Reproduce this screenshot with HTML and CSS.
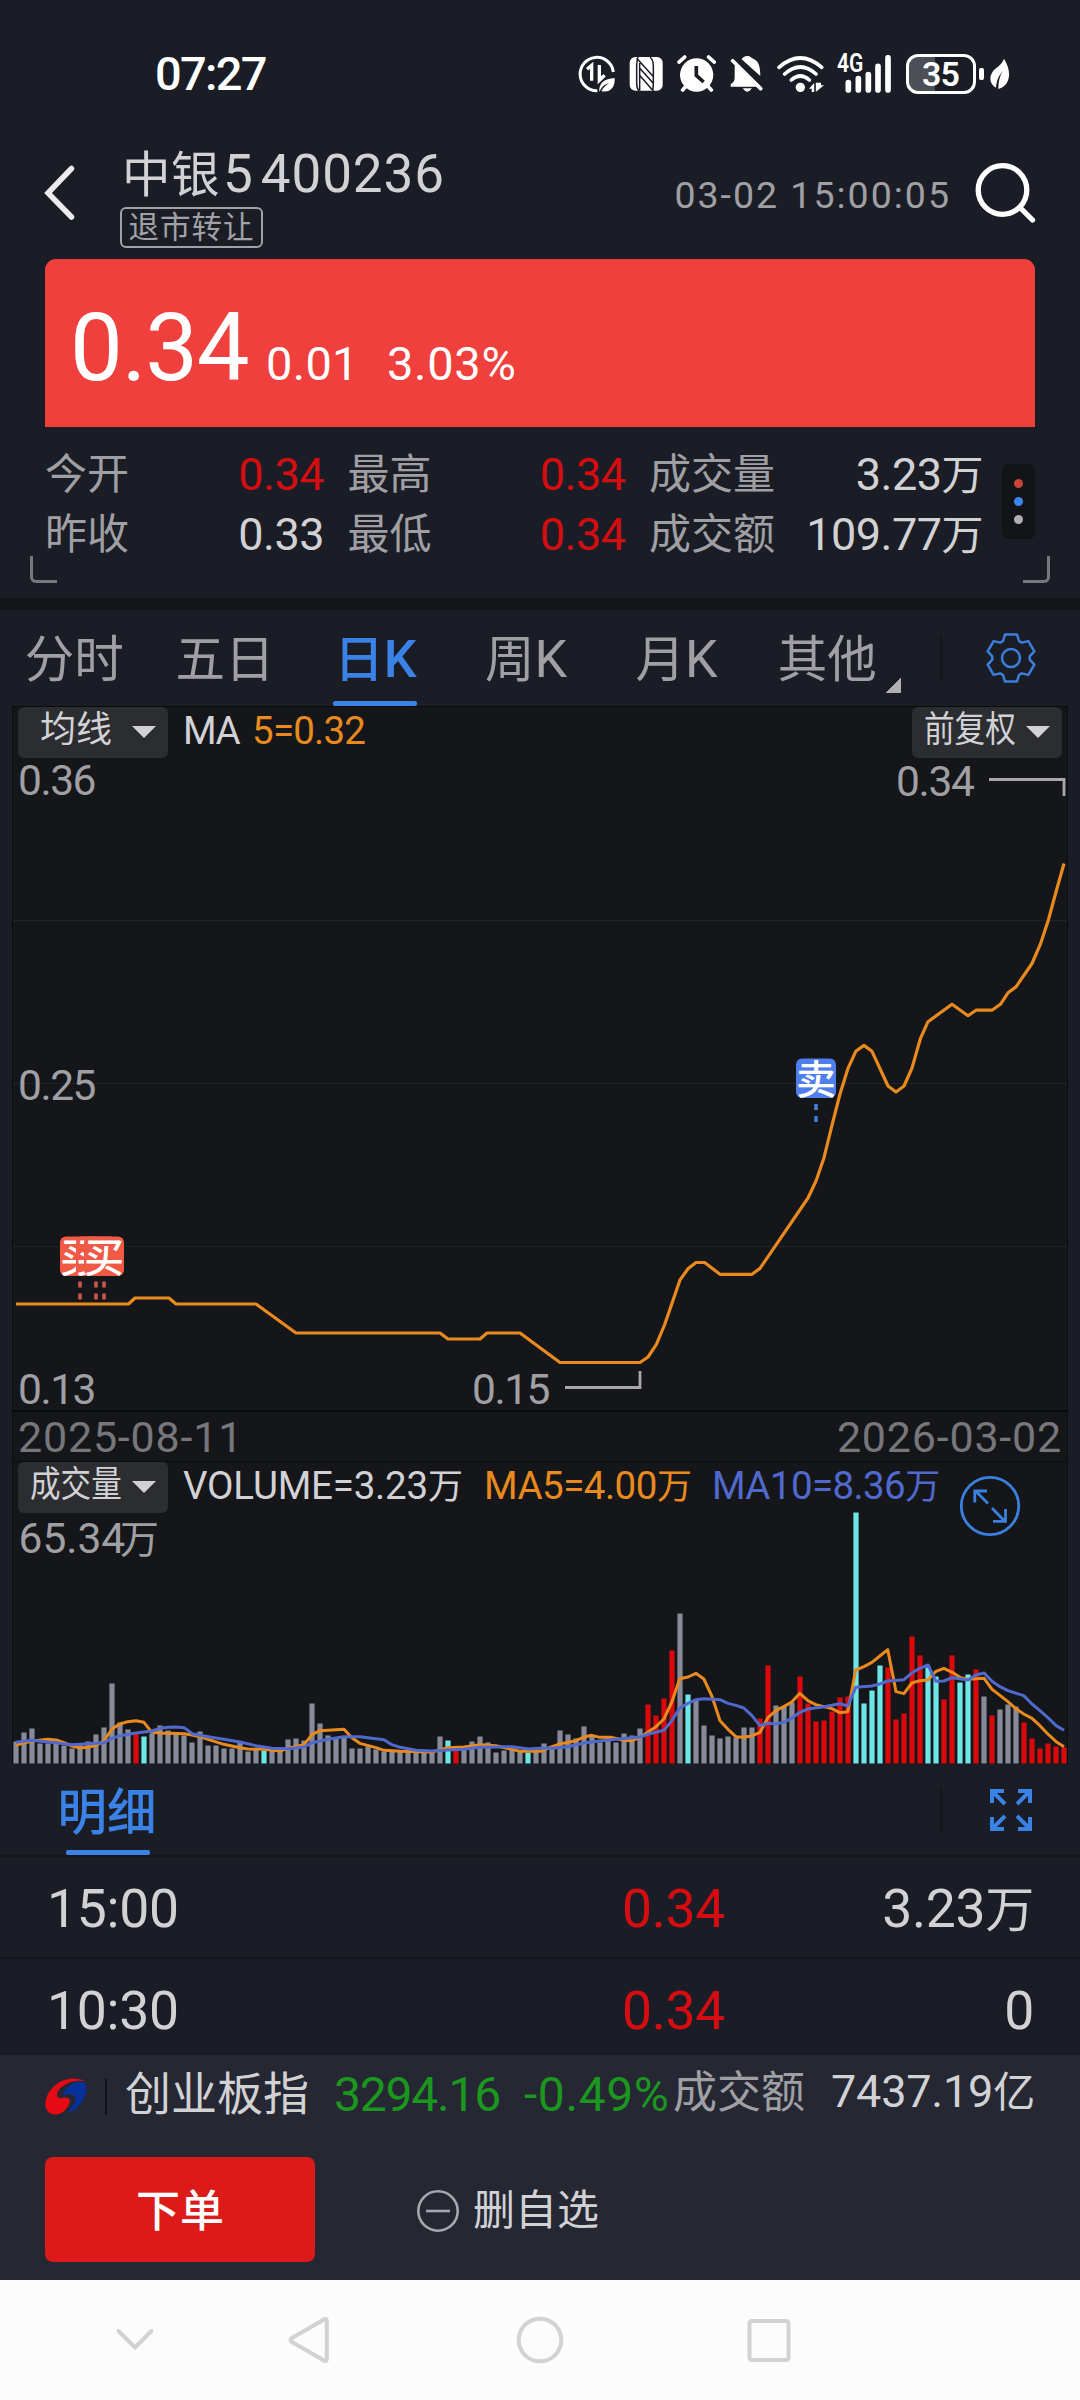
FILE: index.html
```html
<!DOCTYPE html>
<html lang="zh-CN">
<head>
<meta charset="utf-8">
<title>中银5 400236</title>
<link rel="stylesheet" href="styles.css">
</head>
<body>
<div class="statusbar">
  <span class="clock">07:27</span>
  <div class="status-icons">
    <svg class="ic-saver" viewBox="24 27 114 114" width="38" height="38">
      <path d="M130 78A50 50 0 1 0 82 134" fill="none" stroke="#fff" stroke-width="9"/>
      <path d="M51 70l14-12v46M88 57v46l16-15" fill="none" stroke="#fff" stroke-width="10"/>
      <path d="M88 138c-2-24 12-40 46-42c2 30-16 46-40 39c8-12 14-18 24-24c-14 4-24 12-30 27z" fill="#fff"/>
    </svg>
    <svg class="ic-nfc" viewBox="177 31 104 108" width="34.7" height="36">
      <rect x="179" y="34" width="99" height="101" rx="17" fill="#fff"/>
      <path d="M204 34c-4 10-4 20-4 34v44c0 10 2 18 6 23M209 52V135M200 38L249 92M208 66L249 112M208 88L250 136M240 34c8 6 10 14 10 28v40c0 14 0 24-2 33" fill="none" stroke="#1b1d26" stroke-width="4.500"/>
    </svg>
    <svg class="ic-alarm" viewBox="321 27 118 114" width="39.3" height="38">
      <circle cx="380" cy="87" r="50" fill="#fff"/>
      <path d="M327 48l17-15M433 48l-17-15M338 132l18-20M424 132l-18-20" stroke="#fff" stroke-width="11" stroke-linecap="round"/>
      <path d="M379 60v28l22 20" fill="none" stroke="#1b1d26" stroke-width="11"/>
    </svg>
    <svg class="ic-bell" viewBox="480 27 100 114" width="33.3" height="38">
      <path d="M496 52L566 122H482v-8q12-4 12-20V62zM515 40c4-10 22-14 30-4c20 6 26 22 26 54z" fill="#fff"/>
      <path d="M488 44l84 84" stroke="#fff" stroke-width="11" stroke-linecap="round"/>
      <path d="M518 127h28q-14 20-28 0z" fill="#fff"/>
    </svg>
    <svg class="ic-wifi" viewBox="619 27 146 114" width="48.7" height="38">
      <g fill="none" stroke="#fff" stroke-width="11" stroke-linecap="round">
        <path d="M628 64q64-56 128 0M645 84q47-42 94 0M665 102q27-24 54 0"/>
      </g>
      <circle cx="692" cy="124" r="14" fill="#fff"/>
      <path d="M718 128l16-18v28h-8v-10zM763 118h-9v-8h-16v28z" fill="#fff"/>
      <path d="M736 108v32" stroke="#1b1d26" stroke-width="3"/>
    </svg>
    <div class="signal">
      <span class="net">4G</span>
      <svg viewBox="824 27 144 114" width="48" height="38">
        <path d="M837 110v22M867 98v34M897 86v46M926 61v71M956 35v97" stroke="#fff" stroke-width="17" stroke-linecap="round"/>
      </svg>
    </div>
    <div class="battery"><span>35</span></div>
    <i class="battery-tip"></i>
    <svg class="ic-leaf" viewBox="1260 35 60 95" width="20" height="31.7">
      <path d="M1302 37c12 20 18 40 14 58c-4 18-14 28-31 33c0-22 4-38 13-54c-14 18-19 32-20 50c-18-10-22-30-10-48c8-12 26-18 34-39z" fill="#fff"/>
    </svg>
  </div>
</div>

<header class="header">
  <svg class="back" viewBox="0 0 32 56" width="32" height="56"><path d="M27.500 3.500L4 28L27.500 52" fill="none" stroke="#ececee" stroke-width="5.500" stroke-linecap="round"/></svg>
  <div class="title">
    <div class="name"><span>中银</span><b>5</b><b class="code">400236</b></div>
    <div class="badge">退市转让</div>
  </div>
  <time class="stamp">03-02 15:00:05</time>
  <svg class="search" viewBox="0 0 62 62" width="62" height="62"><g fill="none" stroke="#fff" stroke-width="5.300" stroke-linecap="round"><circle cx="27.500" cy="28" r="24.300"/><path d="M46 46.500L57.500 58"/></g></svg>
</header>

<section class="price-card">
  <span class="price">0.34</span><span class="delta">0.01</span><span class="delta pct">3.03%</span>
</section>

<section class="quote">
  <div class="cells">
    <div class="cell"><span>今开</span><b class="red">0.34</b></div>
    <div class="cell"><span>最高</span><b class="red">0.34</b></div>
    <div class="cell"><span>成交量</span><b>3.23<i>万</i></b></div>
    <div class="cell"><span>昨收</span><b>0.33</b></div>
    <div class="cell"><span>最低</span><b class="red">0.34</b></div>
    <div class="cell"><span>成交额</span><b>109.77<i>万</i></b></div>
  </div>
  <div class="more"><i class="d1"></i><i class="d2"></i><i class="d3"></i></div>
  <i class="corner left"></i><i class="corner right"></i>
</section>
<div class="band"></div>

<nav class="tabs">
  <a class="tab">分时</a>
  <a class="tab">五日</a>
  <a class="tab active">日<b>K</b></a>
  <a class="tab">周<b>K</b></a>
  <a class="tab">月<b>K</b></a>
  <a class="tab other">其他</a>
  <i class="divider"></i>
  <svg class="gear" viewBox="-26 -26 52 52" width="52" height="52"><g fill="none" stroke="#3b7fdd" stroke-width="2.500" stroke-linejoin="round"><path d="M-8-17L-6-23.500H6L8-17L10.700-15.400L17.350-16.900L23.350-6.550L18.700-1.600V1.600L23.350 6.550L17.350 16.900L10.700 15.400L8 17L6 23.500H-6L-8 17L-10.700 15.400L-17.350 16.900L-23.350 6.550L-18.700 1.600V-1.600L-23.350-6.550L-17.350-16.900L-10.700-15.400Z"/><circle r="9"/></g></svg>
</nav>

<main class="chart">
  <section class="pane price-pane">
    <svg class="plot" viewBox="13 706 1054 704">
      <path class="grid" d="M13 920.500H1067M13 1083.500H1067M13 1246.500H1067"/>
      <polyline class="ma5" points="16,1304 128.5,1304 135,1298 169,1298 176,1304 256,1304 296,1333 440,1333 448,1339 480,1339 487,1333 520,1333 560,1362.5 640,1362.5 648,1357 656.4,1344.3 664.7,1324.5 672.6,1301.6 680,1279.9 688,1268.8 696,1262.5 704.6,1262.5 720,1274.3 752,1274.3 760,1268.4 808,1198 816,1181 824,1157.7 832.4,1123.7 840,1094 848,1068.3 855.8,1051.3 864,1045.4 872,1051.3 888,1086 896,1092 904,1086 912,1068 920.5,1038.3 928,1021.7 952,1004.3 968,1015.7 976,1010.2 992,1010.2 1000.4,1004.3 1008,992.8 1016,986.9 1032,963.5 1040.4,944.2 1048.6,919.2 1056,892 1064,863.5"/>
      <path class="leader" d="M989 779.500H1064V796M565 1387.500H640V1371"/>
      <g class="axis">
        <text x="18" y="795" textLength="78.500">0.36</text>
        <text x="18" y="1100" textLength="78.500">0.25</text>
        <text x="18" y="1403.500" textLength="78.500">0.13</text>
        <text x="896" y="795.500" textLength="79">0.34</text>
        <text x="472" y="1403.500" textLength="78.500">0.15</text>
      </g>
      <g class="buy">
        <g><rect x="60" y="1236.500" width="40" height="39.500" rx="6"/><text x="80" y="1272">买</text></g>
        <g><rect x="76" y="1236.500" width="40" height="39.500" rx="6"/><text x="96" y="1272">买</text></g>
        <g><rect x="84" y="1236.500" width="40" height="39.500" rx="6"/><text x="104" y="1272">买</text></g>
        <path d="M80 1281.500V1300M96 1281.500V1300M104 1281.500V1300"/>
      </g>
      <g class="sell">
        <rect x="796" y="1058.500" width="40" height="39.500" rx="6"/><text x="816" y="1094">卖</text>
        <path d="M816 1104V1122"/>
      </g>
    </svg>
    <div class="legend">
      <button class="pill"><span>均线</span></button>
      <span class="ma">MA</span><span class="ma orange">5=0.32</span>
      <button class="pill narrow right"><span>前复权</span></button>
    </div>
  </section>
  <div class="dates"><span>2025-08-11</span><span>2026-03-02</span></div>
  <section class="pane volume-pane">
    <svg class="plot" viewBox="13 1461 1054 303">
      <text class="axis" x="18.500" y="1552.500">65.34<tspan class="cjk" x="120">万</tspan></text>
      <g id="bars"></g>
      <g class="vol5" transform="translate(0 1440) scale(.34435 .33333)"><polyline points="46,915 93,903 139,898 163,900 186,908 209,918 232,924 256,922 279,916 302,903 325,867 348,852 371,845 395,842 418,847 441,877 465,879 535,881 558,885 581,890 604,898 650,913 697,923 720,927 767,928 813,933 836,925 883,914 906,884 929,872 999,868 1022,893 1045,910 1092,923 1115,931 1162,934 1254,936 1301,923 1347,921 1394,914 1440,917 1487,928 1510,934 1568,934 1579,930 1603,920 1626,912 1672,902 1696,891 1719,886 1742,892 1773,892 1812,901 1835,902 1859,892 1881,877 1905,860 1928,837 1951,786 1974,716 1998,711 2021,700 2044,717 2068,770 2091,842 2114,868 2137,890 2160,892 2183,888 2207,877 2230,833 2253,812 2276,800 2299,786 2323,760 2346,782 2369,794 2416,806 2439,818 2462,815 2485,690 2509,680 2532,667 2555,648 2578,629 2602,755 2625,761 2648,729 2671,722 2695,720 2718,694 2741,685 2765,697 2788,712 2811,718 2834,716 2858,715 2881,748 2904,766 2927,785 2950,806 2973,822 2997,835 3020,857 3043,882 3067,905 3090,920"/></g>
      <g class="vol10" transform="translate(0 1440) scale(.34435 .33333)"><polyline points="46,907 93,901 139,906 163,908 209,914 232,913 279,910 302,908 325,895 348,887 395,879 441,873 465,865 488,862 511,861 535,863 558,881 604,890 650,898 697,906 743,917 790,925 836,926 883,921 906,908 952,898 999,890 1045,890 1115,899 1138,914 1162,922 1208,931 1254,933 1301,930 1347,928 1394,922 1487,920 1534,927 1568,925 1603,925 1649,920 1696,909 1742,903 1789,898 1859,891 1881,883 1928,871 1951,842 1974,804 1998,790 2021,779 2044,776 2091,779 2114,790 2137,796 2160,804 2183,826 2207,857 2230,850 2253,852 2276,847 2299,835 2323,817 2346,807 2393,800 2416,796 2439,791 2462,798 2485,742 2532,738 2555,732 2578,723 2625,719 2648,699 2671,685 2695,675 2718,724 2741,723 2765,713 2811,720 2834,705 2858,699 2881,724 2904,740 2927,752 2973,767 2997,792 3020,812 3043,833 3067,857 3090,871"/></g>
      <g class="enlarge"><circle cx="990" cy="1506" r="28.700"/><path d="M988 1503.500L975 1490.500M987 1491H974.800V1502.500M992 1508L1005 1521.500M1005.500 1509V1521.300H993"/></g>
    </svg>
    <div class="legend vol">
      <button class="pill narrow"><span>成交量</span></button>
      <span class="v1">VOLUME=3.23<i>万</i></span><span class="v2 orange">MA5=4.00<i>万</i></span><span class="v3 blue">MA10=8.36<i>万</i></span>
    </div>
  </section>
</main>

<section class="detail-head">
  <a class="detail-tab">明细</a>
  <i class="divider"></i>
  <svg class="expand" viewBox="0 0 42 42" width="42" height="42"><g fill="none" stroke="#3a82e6" stroke-width="4"><path d="M2 14V2H14M2 2L15 15M28 2H40V14M40 2L27 15M2 28V40H14M2 40L15 27M40 28V40H28M40 40L27 27"/></g></svg>
</section>
<section class="trades">
  <div class="trade"><span>15:00</span><span class="red">0.34</span><span>3.23<i>万</i></span></div>
  <div class="trade"><span>10:30</span><span class="red">0.34</span><span>0</span></div>
</section>

<footer class="panel">
  <div class="index">
    <svg class="logo" viewBox="131 635 121 107" width="42" height="37">
      <path d="M247 644C215 628 172 638 148 668C126 695 126 730 150 739C174 746 196 728 202 706C206 692 190 688 176 694C162 692 162 676 178 662C198 645 222 640 247 644Z" fill="#e60a14"/>
      <path d="M181 685C190 660 214 643 238 646C256 652 254 676 240 700C228 720 212 732 192 738C208 722 220 704 220 692C216 680 196 680 181 685Z" fill="#06309a"/>
    </svg>
    <i class="sep"></i>
    <span class="idx-name">创业板指</span>
    <span class="idx-val">3294.16</span><span class="idx-pct">-0.49%</span>
    <span class="idx-label">成交额</span>
    <span class="idx-amt">7437.19<i>亿</i></span>
  </div>
  <div class="actions">
    <button class="order">下单</button>
    <svg class="minus" viewBox="0 0 42 42" width="42" height="42"><g fill="none" stroke="#a8a8ac" stroke-width="2.600"><circle cx="21" cy="21" r="19.700"/><path d="M9 21H33"/></g></svg>
    <span class="remove">删自选</span>
  </div>
</footer>

<div class="navbar">
  <svg viewBox="0 0 1080 120" width="1080" height="120"><g fill="none" stroke="#d2d2d4" stroke-width="4" stroke-linecap="round" stroke-linejoin="round"><path d="M118.500 51L135 67.500L151.500 51"/><path d="M324 39.500Q326.800 38 326.800 41V79Q326.800 82 324 80.500L292 62Q289 60 292 58Z"/><circle cx="540" cy="60" r="21.300"/><rect x="749.500" y="41" width="39" height="39" rx="2.500"/></g></svg>
</div>
<script src="script.js"></script>
</body>
</html>
```
FILE: styles.css
```css
* { box-sizing: border-box; }
body {
  margin: 0;
  width: 1080px;
  background: #1b1d26;
  color: #d2d2d5;
  font-family: Roboto, "Noto Sans CJK SC", sans-serif;
}
b, i { font-weight: inherit; font-style: normal; }
button { border: 0; padding: 0; font-family: inherit; color: inherit; }
svg { display: block; flex: none; }
.red { color: #d60d10; }
.orange { color: #e98a1f; }
.blue { color: #5069cd; }

/* status bar */
.statusbar {
  height: 147px;
  padding: 0 70px 0 155px;
  display: flex;
  align-items: center;
  justify-content: space-between;
  color: #fff;
}
.clock { font-size: 47px; font-weight: 500; letter-spacing: -1.7px; line-height: 60px; }
.status-icons { display: flex; align-items: center; }
.ic-nfc { margin-left: 13px; }
.ic-alarm { margin-left: 13.3px; }
.ic-bell { margin-left: 13.7px; }
.ic-wifi { margin-left: 13px; }
.signal { position: relative; margin-left: 19.6px; }
.net {
  position: absolute;
  left: -7px;
  top: -3px;
  font-size: 25px;
  font-weight: 600;
  line-height: 24px;
  transform: scaleX(.84);
  transform-origin: 0 0;
}
.battery {
  width: 70px;
  height: 40px;
  margin-left: 13.4px;
  border: 3px solid #fff;
  border-radius: 12px;
  background: linear-gradient(90deg, #4d4f57 40%, transparent 40%);
  display: flex;
  align-items: center;
  justify-content: center;
}
.battery span { font-size: 34px; font-weight: 600; line-height: 34px; letter-spacing: -1px; }
.battery-tip { width: 4.5px; height: 12px; margin-left: 3.5px; border-radius: 2px; background: #fff; }
.ic-leaf { margin-left: 6.5px; }

/* header */
.header {
  height: 112px;
  padding: 0 43px 17px 44px;
  display: flex;
  align-items: center;
}
.back { margin-top: -3px; }
.title { align-self: flex-start; margin-left: 44px; }
.name {
  height: 56px;
  margin-left: 2px;
  display: flex;
  align-items: baseline;
  font-size: 53px;
  line-height: 55px;
}
.name span { font-size: 48.5px; letter-spacing: .5px; }
.name b { margin-left: 3px; }
.name .code { margin-left: 8px; letter-spacing: .9px; }
.badge {
  width: 143px;
  height: 41px;
  margin-top: 4px;
  border: 2px solid #a2a2a6;
  border-radius: 6px;
  color: #a2a2a6;
  font-size: 30.5px;
  letter-spacing: 1px;
  line-height: 37px;
  text-align: center;
}
.stamp { margin-left: auto; font-size: 37.5px; letter-spacing: 2px; color: #a0a0a4; }
.search { margin: -3px 0 0 24px; }

/* price card */
.price-card {
  height: 168px;
  margin: 0 45px;
  padding: 38.5px 0 0 25px;
  border-radius: 11px 11px 0 0;
  background: #ef403d;
  color: #fff;
  display: flex;
  align-items: baseline;
}
.price { width: 196px; font-size: 94px; line-height: 100px; letter-spacing: -1.2px; }
.delta { width: 121px; font-size: 47px; letter-spacing: .3px; }
.pct { letter-spacing: .7px; }

/* quote cells */
.quote {
  position: relative;
  height: 171px;
  padding: 17.5px 45px 0;
  display: flex;
}
.cells {
  display: grid;
  grid-template-columns: 279px 278px 334px;
  grid-auto-rows: 60px;
  column-gap: 23.5px;
  width: 938px;
}
.cell { display: flex; justify-content: space-between; line-height: 60px; font-size: 42px; }
.cell span { color: #a0a0a4; }
.cell b { font-size: 45px; letter-spacing: -.5px; }
.cell b i { font-size: 42px; }
.more {
  width: 33px;
  height: 75px;
  margin: 19px 0 0 19px;
  border-radius: 6px;
  background: #131417;
  display: flex;
  flex-direction: column;
  align-items: center;
  justify-content: center;
  gap: 9px;
}
.more i { width: 9px; height: 9px; border-radius: 50%; }
.d1 { background: #c84634; }
.d2 { background: #3a86ee; }
.d3 { background: #b0b0b3; }
.corner {
  position: absolute;
  top: 129px;
  width: 27px;
  height: 27px;
  border: solid #77777c;
  border-width: 0 0 3px 3px;
  border-radius: 0 0 0 6px;
}
.corner.left { left: 30px; }
.corner.right { right: 30px; transform: scaleX(-1); }
.band { height: 12px; background: #15161a; }

/* period tabs */
.tabs { height: 96px; display: flex; align-items: center; }
.tab {
  position: relative;
  width: 150.6px;
  height: 96px;
  padding: 4px 2px 0 0;
  font-size: 49.5px;
  line-height: 92px;
  text-align: center;
  color: #a0a0a4;
}
.tab b { font-size: 52px; }
.tab.active { color: #3a82e6; font-weight: 500; }
.tab.active::after {
  content: "";
  position: absolute;
  left: 32px;
  bottom: 0;
  width: 84px;
  height: 5px;
  border-radius: 2px;
  background: #3a82e6;
}
.tab.other::after {
  content: "";
  position: absolute;
  right: 3px;
  bottom: 13px;
  width: 15px;
  height: 15px;
  background: linear-gradient(135deg, transparent 50%, #b0b0b3 50%);
}
.divider { width: 2px; height: 45px; background: #15161a; }
.tabs .divider { margin-left: 36.5px; }
.gear { margin-left: 43px; }

/* charts */
.chart {
  margin: 0 12px;
  border: solid #0b0c0f;
  border-width: 0 1px;
  background: #15161a;
}
.pane { position: relative; border-top: 1px solid #0b0c0f; }
.price-pane { height: 704px; }
.volume-pane { height: 303px; }
.plot { position: absolute; left: 0; top: -1px; width: 1054px; height: calc(100% + 1px); overflow: visible; }
.grid { stroke: #222327; }
.ma5 { fill: none; stroke: #e98a1f; stroke-width: 3.2; stroke-linejoin: round; }
.leader { fill: none; stroke: #a8a8ab; stroke-width: 2.8; }
.axis { font-size: 42.5px; fill: #a0a0a4; }
.axis .cjk { font-size: 39px; }
.buy rect { fill: #f05a44; }
.sell rect { fill: #4f7fea; }
.buy text, .sell text { font-size: 40px; font-weight: 500; fill: #fff; text-anchor: middle; }
.buy path, .sell path { fill: none; stroke-width: 3.5; stroke-dasharray: 6 6; }
.buy path { stroke: #d0574a; }
.sell path { stroke: #3f7fe6; }
.vol5, .vol10 { fill: none; stroke-width: 3; stroke-linejoin: round; }
.vol5 polyline, .vol10 polyline { vector-effect: non-scaling-stroke; }
.vol5 { stroke: #e98a1f; }
.vol10 { stroke: #5069cd; }
.bar { fill: #878a99; }
.bar.r { fill: #d80a0c; }
.bar.c { fill: #6de6e8; }
.enlarge { fill: none; stroke: #3b80de; stroke-width: 2.8; }
.legend {
  position: relative;
  height: 51px;
  padding: 0 5px;
  display: flex;
  align-items: center;
  line-height: 48px;
  font-size: 38.5px;
}
.legend > span { height: 51px; }
.pill {
  width: 150px;
  height: 51px;
  margin-top: -1px;
  padding: 0 12px;
  border-radius: 6px;
  background: #2c2d31;
  display: flex;
  align-items: center;
  justify-content: flex-end;
  gap: 20px;
  font-size: 36px;
  line-height: 48px;
}
.pill span { height: 53px; }
.pill::after {
  content: "";
  border: solid transparent;
  border-width: 12px 12px 0;
  border-top-color: #d2d2d5;
}
.pill.narrow { justify-content: space-between; gap: 0; }
.pill.narrow span { width: 94px; transform: scaleX(.85); transform-origin: 0 50%; white-space: nowrap; }
.pill.right { margin-left: auto; }
.ma { margin-left: 15px; letter-spacing: -1.5px; }
.ma.orange { margin-left: 13px; letter-spacing: -.8px; }
.vol i { font-size: 35px; }
.v1 { width: 301px; margin-left: 15px; letter-spacing: -.2px; }
.v2 { width: 228px; letter-spacing: -.5px; }
.v3 { letter-spacing: -.6px; }
.dates {
  height: 51px;
  padding: 0 5px;
  border-top: 2px solid #0b0c0f;
  display: flex;
  justify-content: space-between;
  font-size: 43px;
  line-height: 51px;
  letter-spacing: .8px;
  color: #77777b;
}

/* trade detail */
.detail-head {
  height: 92.5px;
  border-bottom: 2px solid #15161a;
  display: flex;
  align-items: center;
}
.detail-tab {
  position: relative;
  width: 216px;
  height: 90px;
  padding: 5px 2px 0 0;
  font-size: 49.5px;
  font-weight: 500;
  line-height: 88px;
  text-align: center;
  color: #3a82e6;
}
.detail-tab::after {
  content: "";
  position: absolute;
  left: 66px;
  bottom: -1px;
  width: 84px;
  height: 5px;
  border-radius: 2px;
  background: #3a82e6;
}
.detail-head .divider { margin-left: 724px; }
.expand { margin: 2px 0 0 48px; }
.trades { height: 198.5px; overflow: hidden; }
.trade {
  height: 102px;
  padding: 0 46px 0 47px;
  border-bottom: 2px solid #15161a;
  display: grid;
  grid-template-columns: 575px 200px 1fr;
  font-size: 53.5px;
  line-height: 104px;
  letter-spacing: -.3px;
}
.trade span:last-child { text-align: right; }
.trade i { font-size: 49px; }

/* bottom panel */
.panel { height: 225px; background: #252733; }
.index {
  height: 80px;
  padding: 3px 45px 0;
  display: flex;
  align-items: center;
  white-space: nowrap;
  line-height: 60px;
}
.sep { width: 2px; height: 36px; margin-left: 18px; background: #12131a; }
.idx-name { width: 209px; margin: -6px 0 0 18px; font-size: 46px; }
.idx-val, .idx-pct { font-size: 48px; color: #1b961e; margin-top: -3px; }
.idx-val { width: 190px; letter-spacing: -1.2px; }
.idx-pct { width: 149px; letter-spacing: .6px; }
.idx-label { margin-top: -8px; font-size: 44px; color: #a0a0a4; }
.idx-amt { margin: -8px 0 0 auto; font-size: 45px; letter-spacing: -.2px; }
.idx-amt i { font-size: 42px; }
.actions { margin: 22px 45px 0; display: flex; align-items: center; }
.order {
  width: 270px;
  height: 105px;
  padding-bottom: 4px;
  border-radius: 8px;
  background: #dc1a1a;
  color: #fff;
  font-size: 44px;
  font-weight: 500;
}
.minus { margin: 3px 0 0 102px; }
.remove { margin: 3px 0 0 14px; font-size: 42px; line-height: 60px; }

.navbar { height: 120px; background: #fcfcfc; }
```
FILE: script.js
```js
// Daily volume, oldest first. Suffix: r = up day, c = down day, none = flat.
const volumes = (
  "22 31 35 20 20 20 18 15 19 22 29 36 80 41 34 31r 27c 30 38 33 31 28 21 32 18 18 15 15 22 12 15 13c 14 14 " +
  "24 25 23 60 40 28 25 26 15 15 17 14 12 12 12 12 11 12 12 27 23c 13r 14 22 27 21 11 13 15 12 11c 14 20 17 " +
  "33 29 25 37 28 21 26 21 30 28 35 59r 48r 65r 113r 150 69c 64 38 28 25 27 26 36 36 45r 98r 58 57 61 87r 60r " +
  "42r 43r 52r 66r 67r 251c 60c 73c 98c 96r 44r 50r 127r 108r 97c 87c 64r 108r 81c 89c 94r 67 48r 54 59 57 " +
  "41r 25r 15r 20r 17r 16r"
).split(" ");

const group = document.getElementById("bars");
const baseline = 1763.5;
volumes.forEach((entry, i) => {
  const height = parseInt(entry, 10);
  const bar = document.createElementNS("http://www.w3.org/2000/svg", "rect");
  bar.setAttribute("class", "bar " + entry.replace(/\d/g, ""));
  bar.setAttribute("x", 13.4 + i * 8);
  bar.setAttribute("y", baseline - height);
  bar.setAttribute("width", 5.2);
  bar.setAttribute("height", height);
  group.appendChild(bar);
});
```
